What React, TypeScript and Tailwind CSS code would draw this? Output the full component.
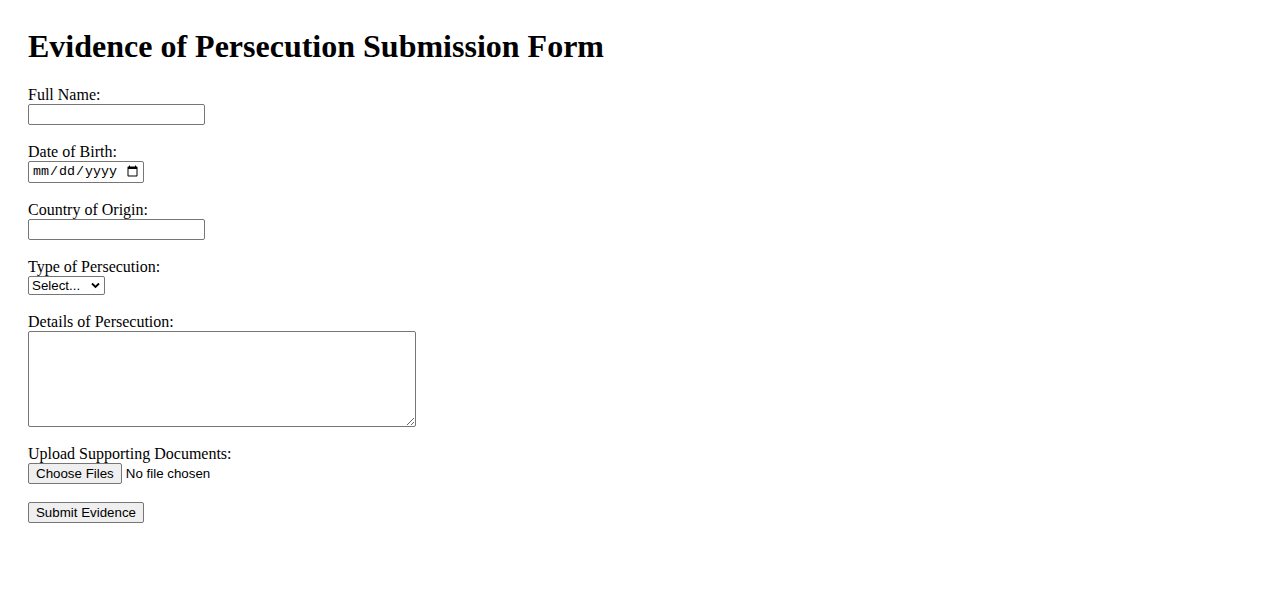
import React from "react"

const serif = { fontFamily: '"Liberation Serif", "Times New Roman", serif' }

const Field = ({ label, children }: { label: string; children: React.ReactNode }) => (
  <div className="mb-[18px]">
    <label className="block text-[16px] leading-[18px] text-black">{label}</label>
    {children}
  </div>
)

const box = "block border border-[#767676] rounded-[2px] bg-white text-[13.333px] text-black"
const sans = "font-['Liberation_Sans',Arial,sans-serif]"
const mono = "font-['Liberation_Mono','Courier_New',monospace]"

const App = () => {
  return (
    <div className="min-h-[601px] bg-white pl-[28px] pt-[28px] text-black" style={serif}>
      <h1 className="text-[32px] font-bold leading-[37px] mb-[21px]">Evidence of Persecution Submission Form</h1>

      <form onSubmit={(e) => e.preventDefault()}>
        <Field label="Full Name:">
          <input type="text" className={`${box} ${sans} w-[177px] h-[21px] px-[2px]`} />
        </Field>

        <Field label="Date of Birth:">
          <input type="date" className={`${box} ${mono} w-[116px] h-[22px] pl-[3px] pr-[2px] text-[12.5px]`} />
        </Field>

        <Field label="Country of Origin:">
          <input type="text" className={`${box} ${sans} w-[177px] h-[21px] px-[2px]`} />
        </Field>

        <Field label="Type of Persecution:">
          <div className="relative w-[77px]">
            <select className={`${box} ${sans} appearance-none w-[77px] h-[19px] pl-[3px] pr-[18px] leading-[17px]`}>
              <option>Select...</option>
              <option>Political</option>
              <option>Religious</option>
              <option>Ethnic</option>
              <option>Other</option>
            </select>
            <svg
              className="absolute right-[5px] top-[6px] pointer-events-none"
              width="9"
              height="7"
              viewBox="0 0 9 7"
            >
              <path d="M1 1.5 L4.5 5 L8 1.5" fill="none" stroke="#000" strokeWidth="1.8" />
            </svg>
          </div>
        </Field>

        <Field label="Details of Persecution:">
          <textarea className={`${box} ${mono} w-[388px] h-[96px] p-[2px]`} />
        </Field>

        <Field label="Upload Supporting Documents:">
          <div className={`flex items-center h-[21px] text-[13.333px] ${sans}`}>
            <button
              type="button"
              className="h-[21px] px-[7px] border border-[#767676] rounded-[2px] bg-[#efefef] text-black leading-[17px]"
            >
              Choose Files
            </button>
            <span className="ml-[4px]">No file chosen</span>
          </div>
        </Field>

        <button
          type="submit"
          className={`block h-[21px] w-[116px] border border-[#767676] rounded-[2px] bg-[#efefef] text-[13.333px] leading-[17px] text-black ${sans}`}
        >
          Submit Evidence
        </button>
      </form>
    </div>
  )
}

export default App
